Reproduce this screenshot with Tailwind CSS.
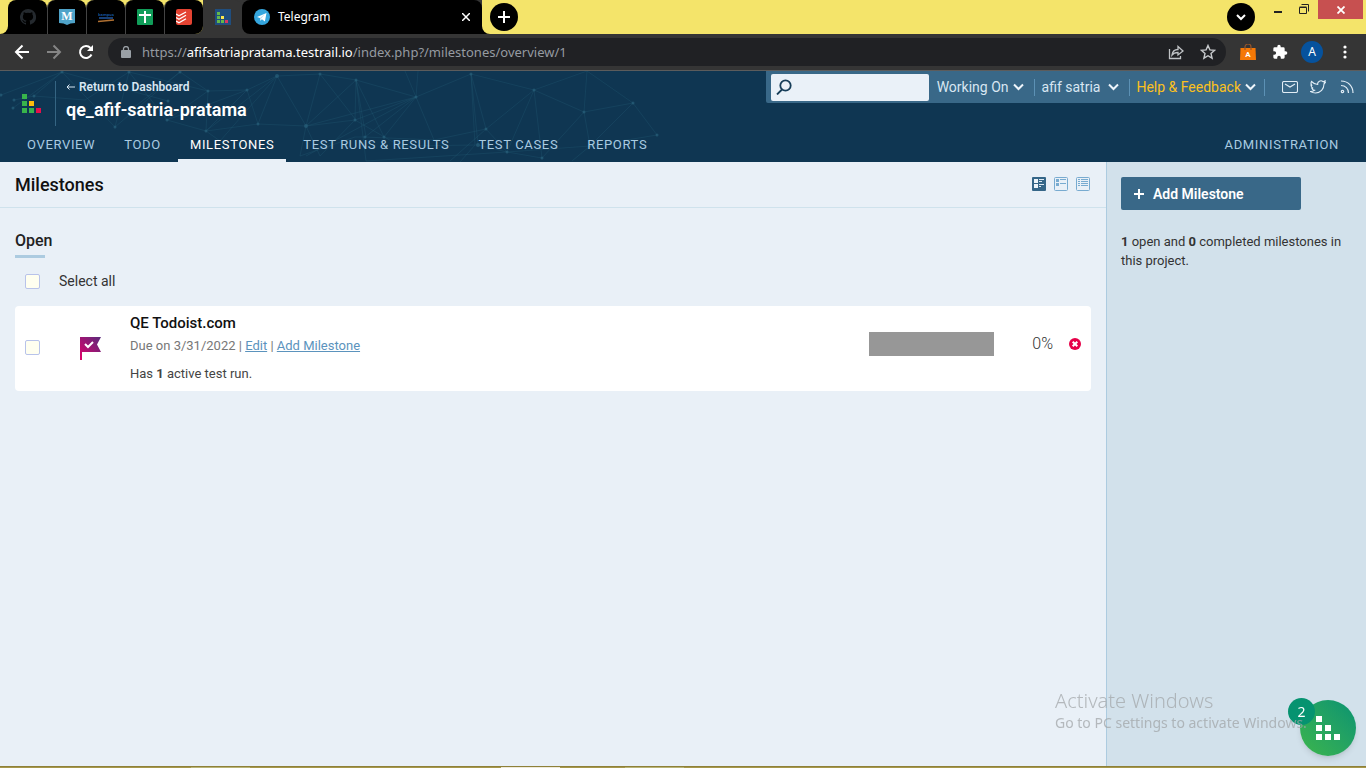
<!DOCTYPE html>
<html lang="en">
<head>
<meta charset="utf-8">
<meta name="viewport" content="width=device-width, initial-scale=1">
<title>Milestones - qe_afif-satria-pratama</title>
<script src="https://cdn.jsdelivr.net/npm/@tailwindcss/browser@4"></script>
</head>
<body class="flex min-h-screen flex-col overflow-x-hidden bg-[#e9f0f7] font-[Roboto,'Liberation_Sans',sans-serif] text-sm text-[#333]">

<!-- Browser tab strip -->
<div class="flex h-[34px] bg-[#f4e46a] font-['Noto_Sans',sans-serif]">
  <div class="flex w-[8px] items-end bg-black"><span class="h-full w-full rounded-br-lg bg-[#f4e46a]"></span></div>
  <div class="flex bg-[#353535]">
    <div class="flex rounded-br-lg bg-[#f4e46a]">
      <button aria-label="GitHub" class="flex w-[39px] items-center justify-center rounded-t-lg bg-black"><svg class="size-4" viewBox="0 0 16 16" fill="#24292e"><path d="M8 0a8 8 0 0 0-2.5 15.6c.4.1.5-.2.5-.4v-1.500c-2.200.5-2.700-1-2.700-1-.4-.9-.9-1.200-.9-1.200-.7-.5.1-.5.1-.5.8.1 1.200.8 1.200.8.7 1.300 1.900.9 2.300.7.1-.5.3-.9.500-1.100C4.700 11.200 2.900 10.500 2.900 7.400c0-.9.300-1.600.8-2.100-.1-.2-.4-1 .1-2.100 0 0 .7-.2 2.200.8a7.500 7.500 0 0 1 4 0c1.500-1 2.200-.8 2.200-.8.5 1.100.2 1.900.1 2.100.5.600.8 1.300.8 2.100 0 3.100-1.900 3.800-3.700 4 .3.300.6.8.6 1.500v2.300c0 .2.100.5.600.4A8 8 0 0 0 8 0z"/></svg></button>
      <button aria-label="MySkill" class="flex w-[39px] items-center justify-center rounded-t-lg border-l border-[#444] bg-black"><svg class="size-4" viewBox="0 0 16 16"><path d="M0 0h16v14l-4.500 0.500L8 16l-3.500-1.500L0 14z" fill="#4fa3c9"/><text x="8" y="11" text-anchor="middle" font-family="Liberation Serif" font-size="12" font-weight="bold" fill="#fff">M</text></svg></button>
      <button aria-label="Kampus Merdeka" class="flex w-[39px] items-center justify-center rounded-t-lg border-l border-[#444] bg-black"><svg class="size-4" viewBox="0 0 16 16"><text x="0" y="7" font-family="Open Sans" font-size="4" font-weight="bold" fill="#15529d">kampus</text><path d="M1 9h14" stroke="#173f76" stroke-width="2"/><path d="m0 12.500 16-1.500" stroke="#b17132" stroke-width="1.300"/></svg></button>
      <button aria-label="Sheets" class="flex w-[39px] items-center justify-center rounded-t-lg border-l border-[#444] bg-black"><svg class="size-4" viewBox="0 0 16 16"><rect width="16" height="16" rx="1" fill="#109d59"/><path d="M8 2v12M2 6h12" stroke="#fff" stroke-width="2"/></svg></button>
      <button aria-label="Todoist" class="flex w-[39px] items-center justify-center rounded-t-lg rounded-br-lg border-l border-[#444] bg-black"><svg class="size-4" viewBox="0 0 16 16" fill="none" stroke="#fff" stroke-width="1.300"><rect width="16" height="16" rx="2" fill="#e44332" stroke="none"/><path d="m0 5 3 1.800L10 3M0 8.500l3 1.800 7-4M0 12l3 1.800 7-4"/></svg></button>
    </div>
    <button aria-label="TestRail" class="flex w-[39px] items-center justify-center rounded-t-lg bg-[#353535]"><svg class="size-4" viewBox="0 0 16 16"><rect width="16" height="16" fill="#204e7e"/><path d="M2 3h3v3H2zM2 7h3v3H2zM2 11h3v3H2zM6 11h3v3H6z" fill="#65b84a"/><path d="M6 7h3v3H6z" fill="#fde84e"/><path d="M10 11h3v3h-3z" fill="#d93860"/></svg></button>
    <div class="flex w-[240px] items-center gap-2 rounded-t-lg rounded-bl-lg bg-black pr-3 pl-3 text-xs text-white"><svg class="size-4" viewBox="0 0 16 16"><circle cx="8" cy="8" r="8" fill="#35a6de"/><path d="m3 8 9.500-4-1.600 8.500-3-2.200-1.600 1.500-.4-2.700z" fill="#fff"/><path d="m6 9 5-4-4 4.800-.6 1.800z" fill="#b6dcf0"/></svg><span class="grow">Telegram</span><button aria-label="Close tab"><svg class="size-2" viewBox="0 0 8 8" stroke="#fff" stroke-width="1.500"><path d="m0 0 8 8M8 0 0 8"/></svg></button></div>
  </div>
  <div class="flex w-[8px] bg-black"><span class="h-full w-full rounded-bl-lg bg-[#f4e46a]"></span></div>
  <button aria-label="New tab" class="mt-[3px] flex size-7 items-center justify-center rounded-full bg-black"><svg class="size-3" viewBox="0 0 12 12" stroke="#fff" stroke-width="2"><path d="M6 0v12M0 6h12"/></svg></button>
  <div class="ml-auto flex items-start">
    <button aria-label="Search tabs" class="mt-[3px] mr-[19px] flex size-7 items-center justify-center rounded-full bg-black"><svg class="size-3" viewBox="0 0 12 12" fill="none" stroke="#fff" stroke-width="2"><path d="m2 4 4 4 4-4"/></svg></button>
    <button aria-label="Minimize" class="mt-[11px] mr-[17px] h-[2px] w-2 bg-[#222]"></button>
    <button aria-label="Restore" class="mt-1 mr-[9px]"><svg class="size-[10px]" viewBox="0 0 10 10" fill="none" stroke="#222"><path d="M.5 3.500h7v6h-7zM.5 3h7M2.500.5h7v7"/></svg></button>
    <button aria-label="Close window" class="mr-[3px] flex h-[19px] w-[45px] items-center justify-center bg-[#c75050]"><svg class="size-2" viewBox="0 0 8 8" stroke="#fff" stroke-width="1.800"><path d="m.5.5 7 7m0-7-7 7"/></svg></button>
  </div>
</div>

<!-- Browser address bar -->
<div class="flex h-[37px] items-center border-b border-[#5c5c5c] bg-[#353535] pr-[15px] pl-[14px] font-['Noto_Sans',sans-serif]">
  <button aria-label="Back" class="mr-4"><svg class="size-4" viewBox="0 0 16 16" fill="none" stroke="#fff" stroke-width="2"><path d="M15 8H2m6.500-6.500L2 8l6.500 6.500"/></svg></button>
  <button aria-label="Forward" class="mr-4"><svg class="size-4" viewBox="0 0 16 16" fill="none" stroke="#858585" stroke-width="2"><path d="M1 8h13M7.500 1.500 14 8l-6.500 6.500"/></svg></button>
  <button aria-label="Reload" class="mr-[14px]"><svg class="size-4" viewBox="0 0 16 16" fill="none" stroke="#fff" stroke-width="2"><path d="M13.500 10.500A6 6 0 1 1 12.500 4"/><path d="M15 1v6H9z" fill="#fff" stroke="none"/></svg></button>
  <div class="flex h-7 grow items-center rounded-full bg-[#202124] pr-[10px] pl-[13px]">
    <svg class="mr-[11px] h-3 w-[10px]" viewBox="0 0 10 12"><rect y="4" width="10" height="8" rx="1" fill="#9aa0a6"/><path d="M2.500 5V3a2.500 2.500 0 0 1 5 0v2" fill="none" stroke="#9aa0a6" stroke-width="1.300"/></svg>
    <span class="grow text-[13px] text-[#969ba1]">https://<span class="text-white">afifsatriapratama.testrail.io</span>/index.php?/milestones/overview/1</span>
    <button aria-label="Share" class="mr-4"><svg class="size-4" viewBox="0 0 16 16" fill="none" stroke="#c0c3c6" stroke-width="1.300"><path d="M1.500 5v9.500h11V12M4 11c.5-4 3-5.500 6-5.500V2.500L15 7l-5 4V8.500c-3 0-4.500.5-6 2.500z"/></svg></button>
    <button aria-label="Bookmark"><svg class="size-4" viewBox="0 0 16 16" fill="none" stroke="#c7cacd" stroke-width="1.400"><path d="m8 1.500 1.900 4.400 4.800.4L11 9.500l1.100 4.700L8 11.700l-4.100 2.500L5 9.500 1.300 6.300l4.800-.4z"/></svg></button>
  </div>
  <button aria-label="Shopping assistant" class="ml-[14px]"><svg class="size-4" viewBox="0 0 16 16"><path d="M.5 4h15l.5 12H0z" fill="#f57806"/><path d="M5 6V3a3 3 0 0 1 6 0v3" fill="none" stroke="#96552a" stroke-width="1.200"/><text x="8" y="13" font-family="Roboto" font-weight="bold" font-size="8" fill="#fff" text-anchor="middle">A</text></svg></button>
  <button aria-label="Extensions" class="ml-4"><svg class="size-4" viewBox="0 0 24 24" fill="#fff"><path d="M20.500 11H19V7a2 2 0 0 0-2-2h-4V3.500a2.500 2.500 0 0 0-5 0V5H4a2 2 0 0 0-2 2v3.800h1.500a2.700 2.700 0 0 1 0 5.400H2V20a2 2 0 0 0 2 2h3.800v-1.500a2.700 2.700 0 0 1 5.400 0V22H17a2 2 0 0 0 2-2v-4h1.500a2.500 2.500 0 0 0 0-5z"/></svg></button>
  <button class="mr-4 ml-[13px] size-[22px] rounded-full bg-[#06529d] text-xs text-white">A</button>
  <button aria-label="Browser menu"><svg class="h-4 w-[12px]" viewBox="0 0 12 16" fill="#fff"><circle cx="6" cy="3" r="1.600"/><circle cx="6" cy="8" r="1.600"/><circle cx="6" cy="13" r="1.600"/></svg></button>
</div>

<!-- Application header -->
<header class="relative flex h-[91px] flex-col justify-between bg-[#0f3652]">
  <svg class="pointer-events-none absolute top-0 left-0 h-[91px] w-[660px]" viewBox="0 0 660 91" fill="none" aria-hidden="true">
    <path d="M1 24 62 1 13 37M14 29 34 25 62 1 115 56 129 1 85 29 34 25M62 1 168 30M129 1 167 49 208 20 180 1 129 40M180 1 115 56M129 1 208 20 247 19 167 49 206 60 247 19 277 5 320 3 306 55 277 5 206 60 258 53 247 19M208 20 206 60 220 70 277 5M258 53 306 55 356 9 320 3 356 49M277 5 258 53M306 55 416 26 356 9 355 49 306 55M356 9 366 90M356 9 384 66 416 26 365 66M416 26 306 85M416 26 434 69 486 58 534 19 471 3 416 26 405 0M416 26 418 0M356 9 366 66M355 49 400 75 478 74 471 3 486 58M471 3 475 74 460 91M534 19 587 0 584 41 633 32 587 0M534 19 584 41 542 87 534 19 507 81 542 87M486 58 507 81 590 75 633 32 657 64 590 75 572 90M584 41 590 75M486 58 450 90M507 81 366 90M306 55 300 85 355 66 365 66 434 69M306 55 320 85 355 49 416 26M478 74 507 81" stroke="#245a75" stroke-opacity=".4" stroke-width=".8"/>
    <g fill="#28607b" fill-opacity=".7"><circle cx="1" cy="24" r="1.500"/><circle cx="62" cy="1" r="1.500"/><circle cx="14" cy="29" r="1.500"/><circle cx="13" cy="37" r="1.500"/><circle cx="34" cy="25" r="1.500"/><circle cx="115" cy="56" r="1.500"/><circle cx="129" cy="1" r="1.500"/><circle cx="180" cy="1" r="1.500"/><circle cx="208" cy="20" r="1.500"/><circle cx="168" cy="30" r="1.500"/><circle cx="167" cy="49" r="1.500"/><circle cx="206" cy="60" r="1.500"/><circle cx="247" cy="19" r="1.500"/><circle cx="258" cy="53" r="1.500"/><circle cx="277" cy="5" r="2"/><circle cx="320" cy="3" r="1.500"/><circle cx="306" cy="55" r="2"/><circle cx="356" cy="9" r="1.500"/><circle cx="416" cy="26" r="1.500"/><circle cx="471" cy="3" r="1.500"/><circle cx="534" cy="19" r="1.500"/><circle cx="584" cy="41" r="1.500"/><circle cx="633" cy="32" r="1.500"/><circle cx="657" cy="64" r="1.500"/><circle cx="355" cy="49" r="1.500"/><circle cx="365" cy="66" r="1.500"/><circle cx="384" cy="66" r="1.500"/><circle cx="478" cy="74" r="2"/><circle cx="486" cy="58" r="1.500"/><circle cx="507" cy="81" r="1.500"/><circle cx="542" cy="87" r="1.500"/><circle cx="590" cy="75" r="1.500"/></g>
  </svg>
  <div class="relative flex items-start justify-between">
    <div class="flex pt-[10px] pl-[22px]">
      <svg class="mt-[13px] h-[19px] w-[19px]" viewBox="0 0 19 19"><path d="M0 0h5v5H0zM0 7h5v5H0zM0 14h5v5H0zM7 14h5v5H7z" fill="#38b44b"/><path d="M7 7h5v5H7z" fill="#fcbd0b"/><path d="M14 14h5v5h-5z" fill="#e60f4b"/></svg>
      <div class="ml-[14px] h-[45px] border-l border-[#356583] pl-[10px]">
        <a href="#" class="flex h-3 items-center gap-1 text-xs font-semibold text-[#d8e6f2]"><svg class="h-[6px] w-[9px]" viewBox="0 0 9 6" fill="none" stroke="currentColor"><path d="M9 3H1m2.500-2.500L1 3l2.500 2.500"/></svg>Return to Dashboard</a>
        <div class="mt-[7px] text-lg leading-5 font-semibold text-white">qe_afif-satria-pratama</div>
      </div>
    </div>
    <div class="flex h-8 items-center rounded-bl-xs bg-[#396888] pr-3 pl-[5px] text-[#d8e6f2]">
      <label class="mr-2 flex h-[27px] w-[158px] items-center rounded-xs bg-[#eaf1f8] pl-[5px]"><svg class="size-4 shrink-0" viewBox="0 0 16 16" fill="none" stroke="#173e59" stroke-width="1.800"><circle cx="9.500" cy="6.500" r="5.200"/><path d="m6 10.500-5 5"/></svg><input type="search" aria-label="Search" class="min-w-0 grow bg-transparent pl-1 outline-none"></label>
      <button class="flex items-center gap-1">Working On<svg class="h-2 w-[11px]" viewBox="0 0 11 8" fill="none" stroke="#eef5fb" stroke-width="2"><path d="m1 1.500 4.500 4.500L10 1.500"/></svg></button>
      <button class="ml-[10px] flex h-[17px] items-center gap-2 border-l border-[#5c91b5] pl-[7px]">afif satria<svg class="h-2 w-[11px]" viewBox="0 0 11 8" fill="none" stroke="#eef5fb" stroke-width="2"><path d="m1 1.500 4.500 4.500L10 1.500"/></svg></button>
      <button class="ml-[10px] flex h-[17px] items-center gap-1 border-x border-[#5c91b5] pr-2 pl-[6px] text-[#fcc11d]">Help &amp; Feedback<svg class="h-2 w-[11px]" viewBox="0 0 11 8" fill="none" stroke="#eef5fb" stroke-width="2"><path d="m1 1.500 4.500 4.500L10 1.500"/></svg></button>
      <a href="#" aria-label="Email" class="ml-[17px]"><svg class="h-3 w-4" viewBox="0 0 16 12" fill="none" stroke="#e1edf6" stroke-width="1.100"><rect x=".5" y=".5" width="15" height="11" rx="1.500"/><path d="m3 3 5 3 5-3"/></svg></a>
      <a href="#" aria-label="Twitter" class="ml-3"><svg class="h-[14px] w-4" viewBox="0 0 16 14" fill="none" stroke="#e1edf6" stroke-width="1.100"><path d="M1.500 1.500c2 2 4 3 6.200 3-.5-3 3.200-5 5.300-2.800l2-.8-.8 1.700 1.300-.3-1.500 1.800C14 9 10.500 13 5.500 13c-1.800 0-3.500-.4-5-1.400 1.800 0 3-.4 4-1.200-1.400-.2-2.400-1-2.700-2.200h1.300C1.700 7.500 1 6.500 1 5.200l1.200.4C.8 4.500.8 3 1.500 1.500z"/></svg></a>
      <a href="#" aria-label="RSS feed" class="ml-[14px]"><svg class="size-[14px]" viewBox="0 0 14 14" fill="none" stroke="#e1edf6" stroke-width="1.200"><path d="M1 1c7 0 12 5 12 12M1 5.500c4.500 0 7.500 3 7.500 7.500"/><circle cx="2.500" cy="11.500" r="1.200"/></svg></a>
    </div>
  </div>
  <nav class="relative flex h-[34px] gap-[5px] px-[15px] text-[13px] leading-5 tracking-wider text-[#a9cbe1]">
    <a href="#" class="px-3 pt-[7px]">OVERVIEW</a>
    <a href="#" class="px-3 pt-[7px]">TODO</a>
    <a href="#" class="border-b-3 border-[#e9f0f7] px-3 pt-[7px] text-white">MILESTONES</a>
    <a href="#" class="px-3 pt-[7px]">TEST RUNS &amp; RESULTS</a>
    <a href="#" class="px-3 pt-[7px]">TEST CASES</a>
    <a href="#" class="px-3 pt-[7px]">REPORTS</a>
    <a href="#" class="ml-auto px-3 pt-[7px]">ADMINISTRATION</a>
  </nav>
</header>

<div class="flex grow">
  <main class="grow">
    <div class="flex h-[46px] items-center justify-between border-b border-[#cfe2ec] pr-4 pl-[15px]">
      <h1 class="text-lg font-medium text-[#111]">Milestones</h1>
      <div class="flex gap-2 pb-[2px]">
        <button aria-label="Large view"><svg class="size-[14px]" viewBox="0 0 14 14"><rect width="14" height="14" rx="1" fill="#356688"/><path d="M2 2h4v4H2zM2 7h4v4H2z" fill="#edf4fa"/><path d="M7 2.500h5M7 4.500h3M7 7.500h5M7 9.500h2" stroke="#dce9f3"/></svg></button>
        <button aria-label="Medium view"><svg class="size-[14px]" viewBox="0 0 14 14"><rect x=".5" y=".5" width="13" height="13" rx="1" fill="none" stroke="#78abd0"/><path d="M2 2h3v3H2zM2 6h3v3H2z" fill="#78abd0"/><path d="M6 2.500h6M6 6.500h6" stroke="#78abd0"/></svg></button>
        <button aria-label="Compact view"><svg class="size-[14px]" viewBox="0 0 14 14"><rect x=".5" y=".5" width="13" height="13" rx="1" fill="none" stroke="#78abd0"/><path d="M2 2.500h2m1 0h7M2 4.500h2m1 0h7M2 6.500h2m1 0h7M2 8.500h2m1 0h7" stroke="#78abd0"/></svg></button>
      </div>
    </div>
    <section class="px-[15px] pt-[23px]">
      <h2 class="text-base leading-5 font-medium text-[#222]">Open</h2>
      <div class="mt-1 h-[3px] w-[30px] bg-[#accbe0]"></div>
      <div class="mt-[13px] flex h-5 items-center pl-[10px]">
        <input id="all" type="checkbox" class="size-[15px] appearance-none rounded-xs border border-[#b8c3ea] bg-[#fffff0]">
        <label for="all" class="pl-[19px]">Select all</label>
      </div>
      <article class="mt-[15px] flex h-[85px] items-center rounded bg-white pr-[10px] pl-[10px]">
        <input type="checkbox" aria-label="Select QE Todoist.com" class="mb-[2px] size-[15px] appearance-none rounded-xs border border-[#b8c3ea] bg-[#fffff0]">
        <svg class="ml-10 h-[23px] w-[21px]" viewBox="0 0 21 23"><defs><linearGradient id="flag" x1="0" y1="1" x2="1" y2="0"><stop stop-color="#e2006a"/><stop offset="1" stop-color="#592b7c"/></linearGradient></defs><path d="M0 0h21l-4 7.500 4 7.500H2v8H0z" fill="url(#flag)"/><path d="m5 7 3 3 5-5" fill="none" stroke="#fff" stroke-width="2"/></svg>
        <div class="ml-[29px] grow text-[13px]">
          <h3 class="text-[15px] leading-5 font-medium text-[#111]">QE Todoist.com</h3>
          <p class="mt-[3px] leading-5 text-[#777]">Due on 3/31/2022 | <a href="#" class="text-[#5b93bd] underline">Edit</a> | <a href="#" class="text-[#5b93bd] underline">Add Milestone</a></p>
          <p class="mt-2 leading-5 text-[#444]">Has <b>1</b> active test run.</p>
        </div>
        <div class="mb-[10px] flex items-center">
          <div class="h-6 w-[125px] bg-[#979797]"></div>
          <span class="w-[59px] text-right text-base font-light">0%</span>
          <button aria-label="Delete milestone" class="ml-4"><svg class="size-3" viewBox="0 0 12 12"><circle cx="6" cy="6" r="6" fill="#e60048"/><path d="m3.700 3.700 4.600 4.600m0-4.600L3.700 8.300" stroke="#fff" stroke-width="2"/></svg></button>
        </div>
      </article>
    </section>
  </main>
  <aside class="w-[260px] shrink-0 border-l border-[#accbe0] bg-[#d2e1eb] px-[14px] pt-[15px]">
    <button class="flex h-[33px] w-[180px] items-center rounded-xs bg-[#396888] pl-[13px] font-semibold text-white"><svg class="mr-[9px] size-[10px]" viewBox="0 0 10 10" stroke="#fff" stroke-width="2"><path d="M5 0v10M0 5h10"/></svg>Add Milestone</button>
    <p class="mt-[22px] text-[13px] leading-[19px]"><b>1</b> open and <b>0</b> completed milestones in this project.</p>
  </aside>
</div>

<!-- Top edge of the desktop taskbar -->
<div class="flex h-[2px] border-t border-[#8e8039] bg-[#a6984b]"><span class="ml-[191px] w-[59px] bg-[#b9b578]"></span><span class="ml-[251px] w-[59px] bg-[#eeeadb]"></span><span class="ml-[65px] w-[59px] bg-[#b9b578]"></span></div>

<!-- Floating help widget and system notice -->
<button aria-label="Help center, 2 new" class="fixed right-[10px] bottom-3 flex size-14 items-center justify-center rounded-full bg-linear-to-tr from-[#3bb54a] to-[#069370] shadow-md">
  <svg class="size-6" viewBox="0 0 24 24" fill="#fff"><path d="M0 0h6v6H0zM0 9h6v6H0zM0 18h6v6H0zM9 9h6v6H9zM9 18h6v6H9zM18 18h6v6h-6z"/></svg>
  <span class="absolute -top-[2px] -left-3 flex size-[27px] items-center justify-center rounded-full bg-[#069370] font-['Noto_Sans',sans-serif] text-sm text-white">2</span>
</button>
<div class="pointer-events-none fixed right-[57px] bottom-[35px] w-[254px] font-['Noto_Sans',sans-serif] whitespace-nowrap text-[#a2a5a8]/75">
  <p class="text-xl leading-6 font-light">Activate Windows</p>
  <p class="text-sm leading-5">Go to PC settings to activate Windows.</p>
</div>
</body>
</html>
